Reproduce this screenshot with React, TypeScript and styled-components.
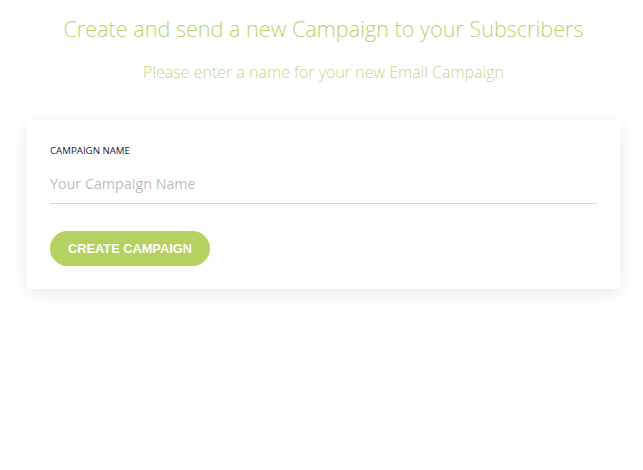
import * as React from "react";
import styled, { createGlobalStyle } from "styled-components";

const GlobalStyle = createGlobalStyle`
  body {
    margin: 0;
    background: #ffffff;
    font-family: "Open Sans", "Liberation Sans", sans-serif;
  }
`;

const Page = styled.main`
  display: flex;
  flex-direction: column;
  align-items: center;
  padding: 13px 23px 60px 27px;
`;

const Heading = styled.h1`
  margin: 0;
  font-size: 21.6px;
  font-weight: 300;
  color: #b7d46e;
  line-height: 32px;
`;

const Subheading = styled.p`
  margin: 16px 0 0;
  font-size: 16px;
  font-weight: 300;
  color: #c4d983;
  line-height: 22px;
`;

const Card = styled.section`
  align-self: stretch;
  margin-top: 37px;
  background: #ffffff;
  border-radius: 4px;
  box-shadow: 0 4px 18px rgba(0, 0, 0, 0.09);
  padding: 25px 23px 23px;
`;

const Label = styled.label`
  display: block;
  font-size: 9.7px;
  color: #1e2233;
  text-transform: uppercase;
  line-height: 12px;
`;

const Input = styled.input`
  display: block;
  width: 100%;
  box-sizing: border-box;
  margin-top: 17px;
  padding: 0 0 9px;
  border: none;
  border-bottom: 1px solid #d9d3ea;
  outline: none;
  font-family: "Open Sans", "Liberation Sans", sans-serif;
  font-size: 14.3px;
  line-height: 20px;
  color: #333;
  &::placeholder {
    color: #bdbdbd;
  }
`;

const Button = styled.button`
  margin-top: 27px;
  height: 35px;
  padding: 0 18px;
  border: none;
  border-radius: 18px;
  background: #b5d160;
  color: #ffffff;
  font-family: "Liberation Sans", Arial, sans-serif;
  font-weight: 700;
  font-size: 12.8px;
  text-transform: uppercase;
  cursor: pointer;
`;

const App = () => {
  return (
    <>
      <GlobalStyle />
      <Page>
        <Heading>Create and send a new Campaign to your Subscribers</Heading>
        <Subheading>Please enter a name for your new Email Campaign</Subheading>
        <Card>
          <Label htmlFor="campaign-name">Campaign Name</Label>
          <Input id="campaign-name" placeholder="Your Campaign Name" />
          <Button>Create Campaign</Button>
        </Card>
      </Page>
    </>
  );
};

export default App;
